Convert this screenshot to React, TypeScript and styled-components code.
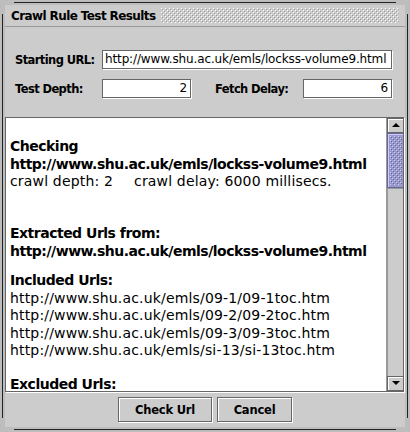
import React from "react";
import styled, { createGlobalStyle } from "styled-components";

const GlobalStyle = createGlobalStyle`
  html, body {
    margin: 0;
    padding: 0;
    background: #cccccc;
  }
  body {
    font-family: "DejaVu Sans", sans-serif;
  }
`;

const Frame = styled.div`
  position: relative;
  box-sizing: border-box;
  width: 410px;
  height: 432px;
  padding: 5px;
  background: #bdbdbd;
  display: flex;
  flex-direction: column;

  &::before {
    content: "";
    position: absolute;
    left: 14px;
    right: 14px;
    top: 2px;
    bottom: 2px;
    border-top: 1px solid #222;
    border-bottom: 1px solid #222;
    pointer-events: none;
  }

  &::after {
    content: "";
    position: absolute;
    left: 2px;
    right: 2px;
    top: 14px;
    bottom: 14px;
    border-left: 1px solid #222;
    border-right: 1px solid #222;
    pointer-events: none;
  }
`;

const Window = styled.div`
  flex: 1;
  display: flex;
  flex-direction: column;
  background: #cccccc;
`;

const TitleBar = styled.div`
  height: 21px;
  border-bottom: 1px solid #999999;
  display: flex;
  align-items: center;
  padding: 0 6px;
`;

const Title = styled.div`
  font-weight: bold;
  font-size: 12px;
  letter-spacing: -0.6px;
  color: #000;
  white-space: nowrap;
`;

const BumpsArea = styled.div`
  flex: 1;
  height: 15px;
  margin-left: 6px;
  display: flex;
`;

const Content = styled.div`
  flex: 1;
  display: flex;
  flex-direction: column;
  padding: 23px 0 4px;
`;

const Form = styled.div`
  display: grid;
  grid-template-columns: 87px 89px 24px 88px 89px;
  grid-auto-rows: 20px;
  row-gap: 9px;
  padding-left: 10px;
`;

const Label = styled.div<{ $col?: number }>`
  grid-column: ${(p) => p.$col ?? 1};
  align-self: center;
  font-weight: bold;
  font-size: 11.5px;
  letter-spacing: -0.6px;
  color: #000;
  white-space: nowrap;
`;

const Field = styled.div<{ $right?: boolean; $span?: string }>`
  grid-column: ${(p) => p.$span ?? "auto"};
  box-sizing: border-box;
  height: 19px;
  border: 1px solid #666666;
  box-shadow: 1px 1px 0 #ffffff;
  background: #fff;
  padding: 0 3px 0 2px;
  font-size: 12px;
  letter-spacing: -0.13px;
  line-height: 17px;
  color: #000;
  text-align: ${(p) => (p.$right ? "right" : "left")};
  white-space: nowrap;
  overflow: hidden;
`;

const ScrollPane = styled.div`
  margin-top: 18px;
  height: 275px;
  box-sizing: border-box;
  border: 1px solid #666666;
  box-shadow: 1px 1px 0 #ffffff;
  margin-right: 1px;
  display: flex;
  background: #fff;
`;

const Viewport = styled.div`
  flex: 1;
  overflow: hidden;
  padding: 20px 0 0 4px;
  font-size: 14px;
  line-height: 17.5px;
  letter-spacing: 0.17px;
  color: #000;
`;

const Para = styled.div<{ $gap?: number }>`
  margin-top: ${(p) => p.$gap ?? 0}px;
  white-space: nowrap;
`;

const Strong = styled.div`
  font-weight: bold;
  letter-spacing: -0.5px;
`;

const Spacer = styled.span`
  display: inline-block;
  width: 21px;
`;

const ScrollBar = styled.div`
  width: 16px;
  display: flex;
  flex-direction: column;
  background: #cccccc;
  border-left: 1px solid #999999;
`;

const ArrowButton = styled.div`
  height: 15px;
  box-sizing: border-box;
  border: 1px solid #666666;
  border-right: none;
  box-shadow: inset 1px 1px 0 #ffffff;
  background: #cccccc;
  display: flex;
  align-items: center;
  justify-content: center;
`;

const Thumb = styled.div`
  height: 55px;
  box-sizing: border-box;
  border: 1px solid #666699;
  border-right: none;
  box-shadow: inset 1px 1px 0 #ccccff;
  background: #9999cc;
  padding: 2px 1px 2px 2px;
  display: flex;
`;

const Track = styled.div`
  flex: 1;
  box-shadow: inset 1px 1px 0 #999999;
`;

const ButtonRow = styled.div`
  display: flex;
  justify-content: center;
  gap: 5px;
  padding-top: 5px;
`;

const Button = styled.div<{ $w: number }>`
  width: ${(p) => p.$w}px;
  height: 25px;
  box-sizing: border-box;
  border: 1px solid #666666;
  box-shadow: inset 1px 1px 0 #ffffff, 1px 1px 0 #ffffff;
  background: #cccccc;
  display: flex;
  align-items: center;
  justify-content: center;
  font-weight: bold;
  font-size: 11.5px;
  letter-spacing: -0.2px;
  color: #000;
`;

type BumpProps = { id: string; bg: string; hi: string; sh: string };

const Bumps = ({ id, bg, hi, sh }: BumpProps) => (
  <svg width="100%" height="100%">
    <defs>
      <pattern id={id} width="4" height="4" patternUnits="userSpaceOnUse">
        <rect width="4" height="4" fill={bg} />
        <rect x="0" y="0" width="1" height="1" fill={hi} />
        <rect x="2" y="2" width="1" height="1" fill={hi} />
        <rect x="1" y="1" width="1" height="1" fill={sh} />
        <rect x="3" y="3" width="1" height="1" fill={sh} />
      </pattern>
    </defs>
    <rect width="100%" height="100%" fill={`url(#${id})`} />
  </svg>
);

const Arrow = ({ up }: { up?: boolean }) => (
  <svg width="8" height="5" viewBox="0 0 8 5">
    <polygon points={up ? "0,4 8,4 4,0" : "0,0 8,0 4,4"} fill="#000" />
  </svg>
);

const url = "http://www.shu.ac.uk/emls/lockss-volume9.html";
const included = [
  "http://www.shu.ac.uk/emls/09-1/09-1toc.htm",
  "http://www.shu.ac.uk/emls/09-2/09-2toc.htm",
  "http://www.shu.ac.uk/emls/09-3/09-3toc.htm",
  "http://www.shu.ac.uk/emls/si-13/si-13toc.htm",
];

export default function App() {
  return (
    <>
      <GlobalStyle />
      <Frame>
        <Window>
          <TitleBar>
            <Title>Crawl Rule Test Results</Title>
            <BumpsArea>
              <Bumps id="titleBumps" bg="#cccccc" hi="#ffffff" sh="#999999" />
            </BumpsArea>
          </TitleBar>
          <Content>
            <Form>
              <Label>Starting URL:</Label>
              <Field $span="2 / 6">{url}</Field>
              <Label>Test Depth:</Label>
              <Field $right>2</Field>
              <Label $col={4}>Fetch Delay:</Label>
              <Field $right>6</Field>
            </Form>
            <ScrollPane>
              <Viewport>
                <Para>
                  <Strong>Checking</Strong>
                  <Strong>{url}</Strong>
                  <div>
                    crawl depth: 2<Spacer />crawl delay: 6000 millisecs.
                  </div>
                </Para>
                <Para $gap={34.5}>
                  <Strong>Extracted Urls from:</Strong>
                  <Strong>{url}</Strong>
                </Para>
                <Para $gap={12}>
                  <Strong>Included Urls:</Strong>
                  {included.map((u) => (
                    <div key={u}>{u}</div>
                  ))}
                </Para>
                <Para $gap={16.5}>
                  <Strong>Excluded Urls:</Strong>
                </Para>
              </Viewport>
              <ScrollBar>
                <ArrowButton>
                  <Arrow up />
                </ArrowButton>
                <Thumb>
                  <Bumps id="thumbBumps" bg="#9999cc" hi="#ccccff" sh="#666699" />
                </Thumb>
                <Track />
                <ArrowButton>
                  <Arrow />
                </ArrowButton>
              </ScrollBar>
            </ScrollPane>
            <ButtonRow>
              <Button $w={94}>Check Url</Button>
              <Button $w={75}>Cancel</Button>
            </ButtonRow>
          </Content>
        </Window>
      </Frame>
    </>
  );
}
